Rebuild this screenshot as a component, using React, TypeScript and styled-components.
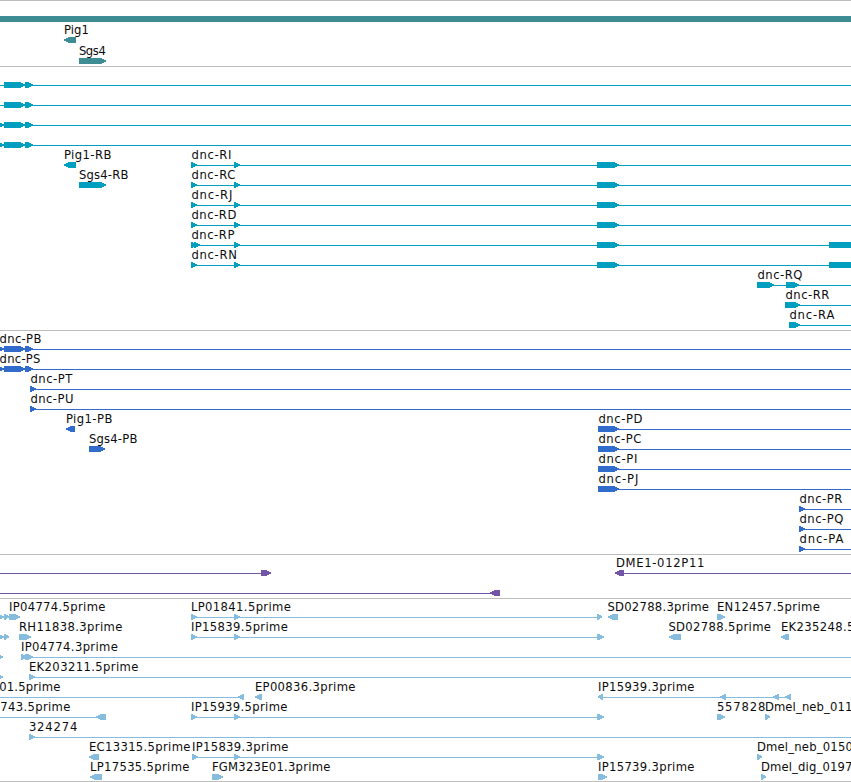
import React from "react";
import styled, { createGlobalStyle } from "styled-components";

const PageStyle = createGlobalStyle`
  html, body { margin: 0; padding: 0; background: #ffffff; }
  body { overflow: hidden; }
`;

const Browser = styled.main`
  display: flex;
  flex-direction: column;
  width: 851px;
  height: 782px;
  overflow: hidden;
  background: #ffffff;
`;

const Track = styled.section<{ $color: string; $top?: number; $bottom?: number; $last?: boolean }>`
  display: flex;
  flex-direction: column;
  flex: none;
  border-top: 1px solid #bdbdbd;
  border-bottom: ${(p) => (p.$last ? "1px solid #bdbdbd" : "0")};
  padding: ${(p) => p.$top ?? 1}px 0 ${(p) => p.$bottom ?? 2}px;
  color: ${(p) => p.$color};
`;

const Lane = styled.svg<{ $height: number }>`
  display: block;
  flex: none;
  width: 851px;
  height: ${(p) => p.$height}px;
  overflow: hidden;
`;

const Label = styled.text`
  font-family: "DejaVu Sans", sans-serif;
  font-size: 11.6px;
  fill: #0c0c0c;
`;

const Shape = styled.path`
  fill: currentColor;
  shape-rendering: crispEdges;
`;

type Kind = "R" | "L" | "B";
type Feature = [Kind, number, number];
type Name = [string, number, number];
interface LaneData {
  names?: Name[];
  lines?: [number, number][];
  features?: Feature[];
}

// Outline of an exon block: arrowhead on the right, on the left, or a plain block.
function outline([kind, a, b]: Feature, y: number) {
  const tip = Math.min(6, b - a) - 1;
  if (kind === "B") return `M${a} ${y}H${b}V${y + 6}H${a}Z`;
  if (kind === "R") return `M${a} ${y}H${b - tip}L${b} ${y + 2.4}V${y + 3.6}L${b - tip} ${y + 6}H${a}Z`;
  return `M${b} ${y}H${a + tip}L${a} ${y + 2.4}V${y + 3.6}L${a + tip} ${y + 6}H${b}Z`;
}

function FeatureLane({ lane, height = 20 }: { lane: LaneData; height?: number }) {
  const y = height - 6;
  return (
    <Lane $height={height}>
      {lane.lines?.map(([a, b]) => (
        <Shape key={a} d={`M${a} ${y + 3}H${b}v1H${a}Z`} />
      ))}
      {lane.features?.map((f) => (
        <Shape key={f[1]} d={outline(f, y)} />
      ))}
      {lane.names?.map(([text, x, end]) => (
        <Label key={text} x={x + 0.4} y={height - 9} textLength={end - x}>
          {text}
        </Label>
      ))}
    </Lane>
  );
}

const genes: LaneData[] = [
  { features: [["B", 0, 851]] },
  { names: [["Pig1", 63.5, 88.5]], features: [["L", 64, 76]] },
  { names: [["Sgs4", 78.5, 105.5]], features: [["R", 79, 106]] },
];

const upstream: Feature[] = [["R", 4, 25], ["R", 25, 33]];
const upstreamTip: Feature[] = [["R", -2, 4], ...upstream];
const dnc: Feature[] = [["R", 191, 197], ["R", 234, 240], ["R", 597, 619]];

const transcripts: LaneData[] = [
  { lines: [[0, 851]], features: upstream },
  { lines: [[0, 851]], features: upstream },
  { lines: [[0, 851]], features: upstreamTip },
  { lines: [[0, 851]], features: upstreamTip },
  {
    names: [["Pig1-RB", 63.5, 111], ["dnc-RI", 191, 231]],
    lines: [[191, 851]],
    features: [["L", 64, 76], ...dnc],
  },
  {
    names: [["Sgs4-RB", 78.5, 128], ["dnc-RC", 191, 235]],
    lines: [[191, 851]],
    features: [["R", 79, 106], ...dnc],
  },
  { names: [["dnc-RJ", 191, 232]], lines: [[191, 851]], features: dnc },
  { names: [["dnc-RD", 191, 236]], lines: [[191, 851]], features: dnc },
  {
    names: [["dnc-RP", 191, 234]],
    lines: [[191, 851]],
    features: [...dnc, ["R", 194, 200], ["B", 829, 851]],
  },
  {
    names: [["dnc-RN", 191, 236.5]],
    lines: [[191, 851]],
    features: [...dnc, ["B", 829, 851]],
  },
  {
    names: [["dnc-RQ", 757, 802]],
    lines: [[757, 851]],
    features: [["R", 757, 774], ["R", 786, 799]],
  },
  { names: [["dnc-RR", 785, 829]], lines: [[785, 851]], features: [["R", 785, 800]] },
  { names: [["dnc-RA", 789, 834]], lines: [[789, 851]], features: [["R", 789, 800]] },
];

const dncLate = (text: string, end: number): LaneData => ({
  names: [[text, 598, end]],
  lines: [[598, 851]],
  features: [["R", 598, 619]],
});

const dncLast = (text: string, end: number): LaneData => ({
  names: [[text, 799, end]],
  lines: [[799, 851]],
  features: [["R", 799, 805]],
});

const proteins: LaneData[] = [
  { names: [["dnc-PB", -0.8, 41]], lines: [[0, 851]], features: upstreamTip },
  { names: [["dnc-PS", -0.8, 40]], lines: [[0, 851]], features: upstreamTip },
  { names: [["dnc-PT", 30, 72]], lines: [[30, 851]], features: [["R", 30, 36]] },
  { names: [["dnc-PU", 30, 73]], lines: [[30, 851]], features: [["R", 30, 36]] },
  {
    names: [["Pig1-PB", 65.5, 112], ["dnc-PD", 598, 642]],
    lines: [[598, 851]],
    features: [["L", 66, 75], ["R", 598, 619]],
  },
  {
    names: [["Sgs4-PB", 88.5, 137], ["dnc-PC", 598, 641]],
    lines: [[598, 851]],
    features: [["R", 89, 105], ["R", 598, 619]],
  },
  dncLate("dnc-PI", 637),
  dncLate("dnc-PJ", 638),
  dncLast("dnc-PR", 842),
  dncLast("dnc-PQ", 843),
  dncLast("dnc-PA", 843),
];

const insertions: LaneData[] = [
  {
    names: [["DME1-012P11", 615.5, 704]],
    lines: [[0, 265], [620, 851]],
    features: [["R", 261, 271], ["L", 615, 624]],
  },
  { lines: [[0, 495]], features: [["L", 490, 500]] },
];

const est: Feature[] = [["R", 191, 197], ["R", 234, 240], ["R", 597, 604]];

const ests: LaneData[] = [
  {
    names: [
      ["IP04774.5prime", 8.5, 105],
      ["LP01841.5prime", 190.5, 290.5],
      ["SD02788.3prime", 607, 708.5],
      ["EN12457.5prime", 716.5, 819.5],
    ],
    lines: [[0, 9], [191, 600]],
    features: [
      ["R", -2, 4], ["R", 4, 9], ["R", 9, 20], ["R", 191, 197], ["R", 234, 240],
      ["R", 597, 602], ["L", 608, 618], ["R", 717, 725],
    ],
  },
  {
    names: [
      ["RH11838.3prime", 18.5, 122],
      ["IP15839.5prime", 190.5, 287.5],
      ["SD02788.5prime", 668, 770.5],
      ["EK235248.5prime", 780.5, 889.5],
    ],
    lines: [[0, 9], [191, 600]],
    features: [["R", -2, 4], ["R", 4, 9], ["R", 19, 31], ...est, ["L", 669, 681], ["L", 781, 789]],
  },
  {
    names: [["IP04774.3prime", 20.5, 117.5]],
    lines: [[21, 851]],
    features: [["R", -3, 3], ["R", 21, 27], ["R", 25, 33]],
  },
  {
    names: [["EK203211.5prime", 28.5, 138]],
    lines: [[29, 851]],
    features: [["R", -3, 3], ["R", 29, 35]],
  },
  {
    names: [
      ["01.5prime", -1.2, 60],
      ["EP00836.3prime", 254.5, 355],
      ["IP15939.3prime", 597.5, 694],
    ],
    lines: [[0, 244], [598, 791]],
    features: [
      ["L", 238, 244], ["L", 255, 262], ["L", 598, 603], ["L", 720, 726],
      ["L", 773, 779], ["L", 785, 791],
    ],
  },
  {
    names: [
      ["743.5prime", -0.2, 70],
      ["IP15939.5prime", 190.5, 287],
      ["557828", 716.5, 765],
      ["Dmel_neb_011", 764.5, 852],
    ],
    lines: [[0, 100], [191, 600]],
    features: [["L", 96, 106], ...est, ["R", 717, 725], ["R", 765, 770]],
  },
  { names: [["324274", 28.5, 77]], lines: [[29, 851]], features: [["R", 29, 35]] },
  {
    names: [
      ["EC13315.5prime", 88.5, 190],
      ["IP15839.3prime", 191.5, 288],
      ["Dmel_neb_0150", 756.5, 852.5],
    ],
    lines: [[192, 600]],
    features: [
      ["L", 89, 99], ["R", 192, 198], ["R", 234, 240], ["R", 597, 604], ["R", 757, 762],
    ],
  },
  {
    names: [
      ["LP17535.5prime", 89.5, 189],
      ["FGM323E01.3prime", 211.5, 330],
      ["IP15739.3prime", 597.5, 694],
      ["Dmel_dig_0197", 760.5, 852],
    ],
    features: [["L", 90, 102], ["R", 212, 223], ["R", 598, 607], ["R", 761, 766]],
  },
];

export default function App() {
  return (
    <>
      <PageStyle />
      <Browser>
        <Track $color="#3e8d94" $top={0}>
          {genes.map((lane, i) => <FeatureLane key={i} lane={lane} height={21} />)}
        </Track>
        <Track $color="#009fc0">
          {transcripts.map((lane, i) => <FeatureLane key={i} lane={lane} />)}
        </Track>
        <Track $color="#316bcb">
          {proteins.map((lane, i) => <FeatureLane key={i} lane={lane} />)}
        </Track>
        <Track $color="#7355a8">
          {insertions.map((lane, i) => <FeatureLane key={i} lane={lane} />)}
        </Track>
        <Track $color="#86bcdd" $bottom={1} $last>
          {ests.map((lane, i) => <FeatureLane key={i} lane={lane} />)}
        </Track>
      </Browser>
    </>
  );
}
